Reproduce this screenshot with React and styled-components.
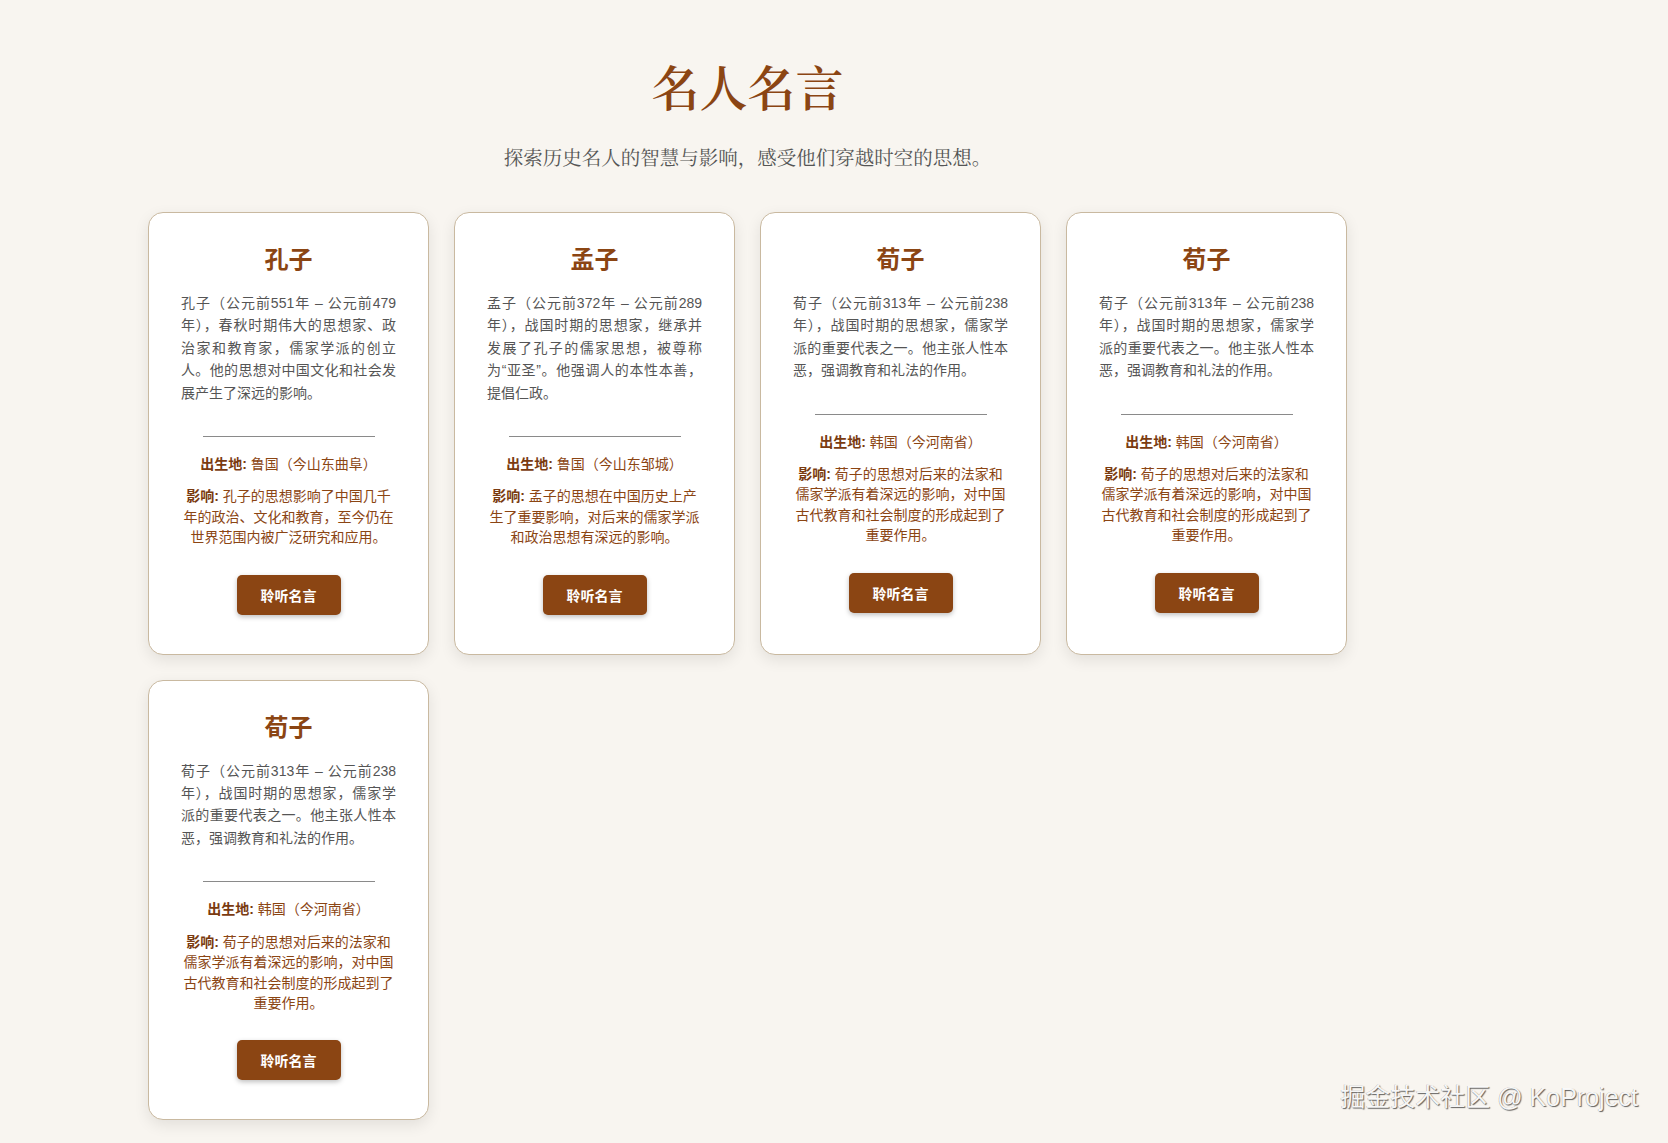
import React from "react";
import styled, { createGlobalStyle } from "styled-components";

const GlobalStyle = createGlobalStyle`
  html, body {
    margin: 0;
    padding: 0;
    background: #f8f5f0;
  }
  body {
    font-family: "Liberation Sans", "Noto Sans CJK SC", sans-serif;
  }
  * { box-sizing: border-box; }
`;

const Page = styled.div`
  position: relative;
  min-height: 100vh;
  padding: 60px 0 20px 148px;
  background: #f8f5f0;
`;

const Container = styled.main`
  width: 1199px;
`;

const Header = styled.header`
  text-align: center;
  margin-bottom: 39px;
`;

const Title = styled.h1`
  margin: 0 0 25px;
  font-family: "Liberation Serif", "Noto Serif CJK SC", "Noto Sans CJK SC", serif;
  font-size: 48px;
  line-height: 60px;
  font-weight: 600;
  color: #8b4513;
`;

const Subtitle = styled.p`
  margin: 0;
  font-family: "Liberation Serif", "Noto Serif CJK SC", "Noto Sans CJK SC", serif;
  font-size: 19.5px;
  line-height: 28px;
  color: #555;
`;

const Grid = styled.section`
  display: grid;
  grid-template-columns: repeat(4, 281px);
  gap: 25px;
`;

const Card = styled.article`
  display: flex;
  flex-direction: column;
  align-items: center;
  background: #fff;
  border: 1px solid #c9b9a0;
  border-radius: 15px;
  padding: 32px 32px 39px;
  box-shadow: 0 5px 15px rgba(0, 0, 0, 0.09);
`;

const Name = styled.h2`
  margin: 0 0 22px;
  font-family: "Noto Sans CJK SC", sans-serif;
  font-size: 24px;
  line-height: 25px;
  font-weight: 700;
  color: #8b4513;
`;

const Desc = styled.p`
  align-self: stretch;
  margin: 0;
  font-size: 14px;
  line-height: 22.4px;
  color: #555;
  text-align: justify;
`;

const Divider = styled.hr`
  width: 80%;
  margin: 32px auto 17px;
  border: none;
  border-top: 1px solid #8a8a8a;
  height: 0;
`;

const Info = styled.p`
  align-self: stretch;
  margin: 0 -2px ${(p) => p.$mb || 0}px;
  font-size: 14px;
  line-height: 20.4px;
  color: #8b4513;
  text-align: center;
  white-space: nowrap;

  strong {
    font-weight: 700;
    color: #7a3b10;
  }
`;

const Button = styled.button`
  margin-top: 27px;
  padding: 10px 24px;
  border: none;
  border-radius: 5px;
  background: #8b4513;
  color: #fff;
  font-family: "Noto Sans CJK SC", sans-serif;
  font-size: 14px;
  line-height: 20px;
  font-weight: 700;
  box-shadow: 0 2px 5px rgba(0, 0, 0, 0.25);
  cursor: pointer;
`;

const Watermark = styled.div`
  position: absolute;
  right: 30px;
  bottom: 29px;
  font-family: "Liberation Sans", "Noto Sans CJK SC", sans-serif;
  font-size: 25px;
  line-height: 34px;
  color: rgba(255, 255, 255, 0.95);
  text-shadow: 1px 1px 1px rgba(0, 0, 0, 0.6), -0.5px -0.5px 0 rgba(0, 0, 0, 0.3);
  pointer-events: none;
`;

const xunzi = {
  name: "荀子",
  desc: "荀子（公元前313年 – 公元前238年），战国时期的思想家，儒家学派的重要代表之一。他主张人性本恶，强调教育和礼法的作用。",
  birth: "韩国（今河南省）",
  impact: [
    "荀子的思想对后来的法家和",
    "儒家学派有着深远的影响，对中国",
    "古代教育和社会制度的形成起到了",
    "重要作用。",
  ],
};

const people = [
  {
    name: "孔子",
    desc: "孔子（公元前551年 – 公元前479年），春秋时期伟大的思想家、政治家和教育家，儒家学派的创立人。他的思想对中国文化和社会发展产生了深远的影响。",
    birth: "鲁国（今山东曲阜）",
    impact: [
      "孔子的思想影响了中国几千",
      "年的政治、文化和教育，至今仍在",
      "世界范围内被广泛研究和应用。",
    ],
  },
  {
    name: "孟子",
    desc: "孟子（公元前372年 – 公元前289年），战国时期的思想家，继承并发展了孔子的儒家思想，被尊称为“亚圣”。他强调人的本性本善，提倡仁政。",
    birth: "鲁国（今山东邹城）",
    impact: [
      "孟子的思想在中国历史上产",
      "生了重要影响，对后来的儒家学派",
      "和政治思想有深远的影响。",
    ],
  },
  xunzi,
  xunzi,
  xunzi,
];

export default function App() {
  return (
    <>
      <GlobalStyle />
      <Page>
        <Container>
          <Header>
            <Title>名人名言</Title>
            <Subtitle>探索历史名人的智慧与影响，感受他们穿越时空的思想。</Subtitle>
          </Header>
          <Grid>
            {people.map((p, i) => (
              <Card key={i}>
                <Name>{p.name}</Name>
                <Desc>{p.desc}</Desc>
                <Divider />
                <Info $mb={12}>
                  <strong>出生地:</strong> {p.birth}
                </Info>
                <Info>
                  <strong>影响:</strong>{" "}
                  {p.impact.map((line, j) => (
                    <React.Fragment key={j}>
                      {j > 0 && <br />}
                      {line}
                    </React.Fragment>
                  ))}
                </Info>
                <Button>聆听名言</Button>
              </Card>
            ))}
          </Grid>
        </Container>
        <Watermark>掘金技术社区 @ KoProject</Watermark>
      </Page>
    </>
  );
}
